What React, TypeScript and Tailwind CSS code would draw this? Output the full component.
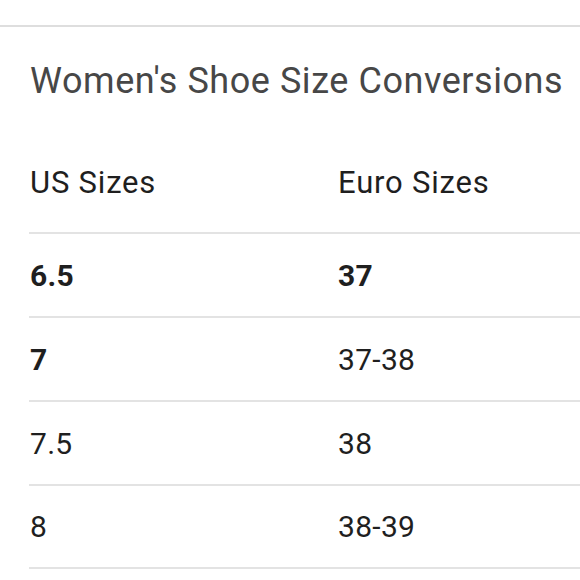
const rows = [
  { us: "6.5", eu: "37", bold: true, euBold: true },
  { us: "7", eu: "37-38", bold: true, euBold: false },
  { us: "7.5", eu: "38", bold: false, euBold: false },
  { us: "8", eu: "38-39", bold: false, euBold: false },
];

export default function App() {
  return (
    <div className="w-[580px] h-[580px] bg-white overflow-hidden font-['Roboto',sans-serif]">
      {/* top divider */}
      <div className="mt-[25px] h-[2px] bg-[#dedede]" />

      <div className="h-[108px] flex items-center pl-[30px]">
        <h1 className="text-[36px] leading-normal text-[#474747] tracking-[0.55px] whitespace-nowrap">
          Women's Shoe Size Conversions
        </h1>
      </div>

      <div className="ml-[29px] text-[#1f1f1f]">
        <div className="h-[99px] flex items-center text-[31px] tracking-[0.8px] border-b-2 border-[#e3e3e3]">
          <div className="w-[309px] pl-[1px]">US Sizes</div>
          <div>Euro Sizes</div>
        </div>
        {rows.map((r, i) => (
          <div
            key={r.us}
            className={`flex items-center text-[30px] tracking-[0.3px] border-b-2 border-[#e3e3e3] ${
              i === rows.length - 1 ? "h-[83px]" : "h-[84px]"
            }`}
          >
            <div className={`w-[309px] pl-[1px] ${r.bold ? "font-bold" : ""}`}>{r.us}</div>
            <div className={r.euBold ? "font-bold" : ""}>{r.eu}</div>
          </div>
        ))}
      </div>
    </div>
  );
}
